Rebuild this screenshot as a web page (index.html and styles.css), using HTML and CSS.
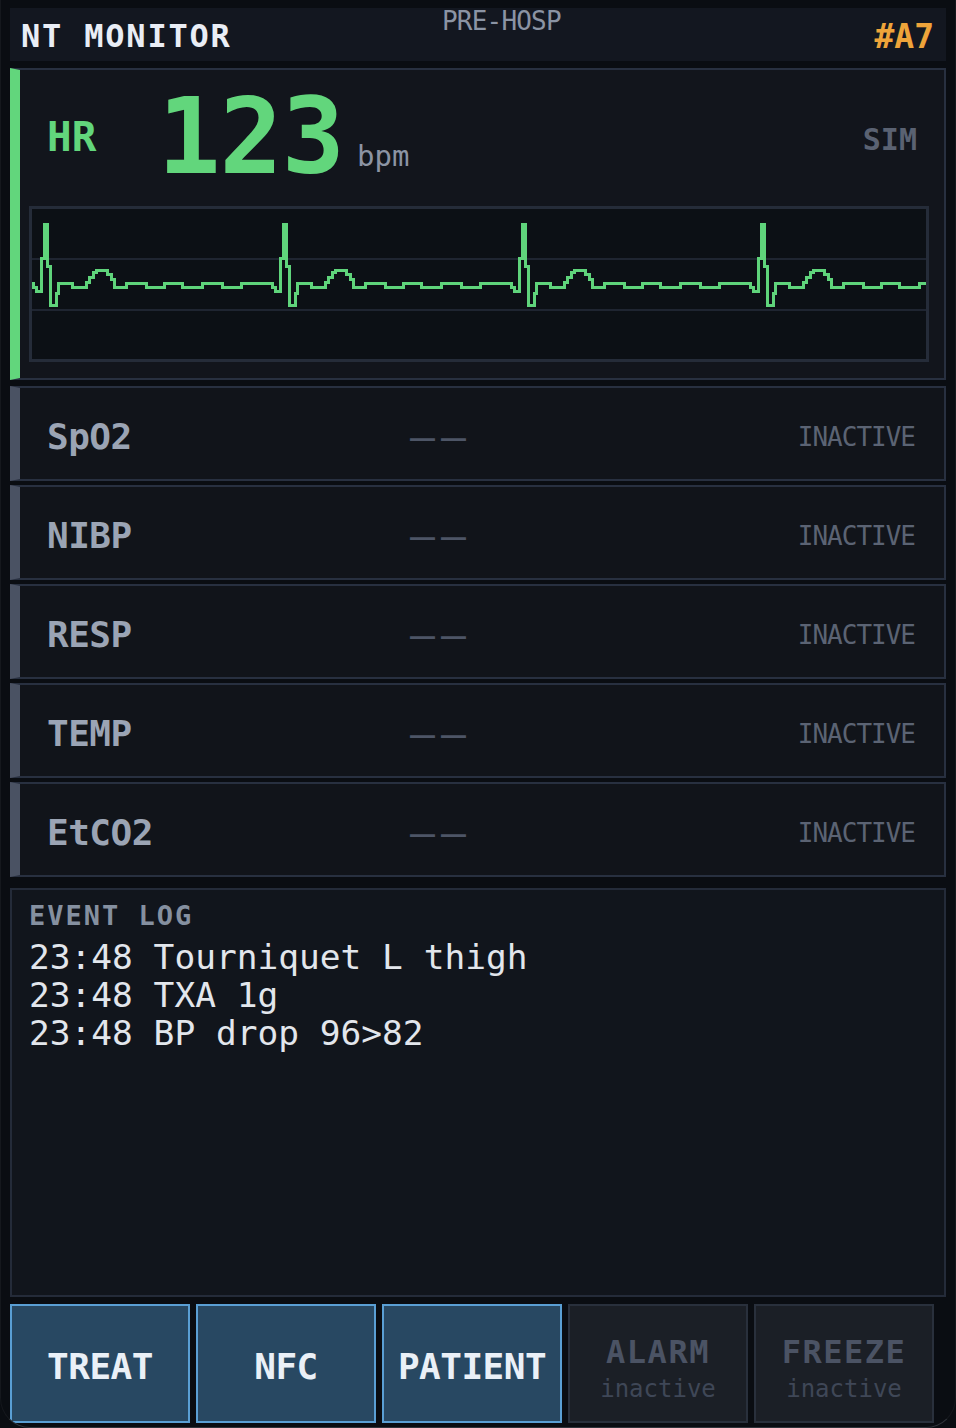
FILE: index.html
```html
<!DOCTYPE html>
<html lang="en">
<head>
<meta charset="utf-8">
<title>NT Monitor</title>
<link rel="stylesheet" href="styles.css">
</head>
<body>
<div class="device">
  <header class="topbar">
    <div class="title">NT MONITOR</div>
    <div class="mode">PRE-HOSP</div>
    <div class="unit">#A7</div>
  </header>

  <section class="hr-panel">
    <div class="hr-top">
      <span class="hr-label">HR</span>
      <span class="hr-value">123</span>
      <span class="hr-unit">bpm</span>
      <span class="hr-sim">SIM</span>
    </div>
    <div class="ecg">
      <svg class="ecg-svg" width="894" height="150" viewBox="32 209 894 150">
        <line class="grid" x1="32" y1="259" x2="926" y2="259"/>
        <line class="grid" x1="32" y1="310" x2="926" y2="310"/>
        <path class="trace" d="M32 283 h1
          v4h3v4h5v-33h3v-34h3v42h3v39h6v-12h2v-10h14v4h14v-5h3v-5h4v-5h3v-2h11v4h4v5h3v8h12v-4h20v4h18v-4h18v4h20v-4h20v4h19v-4h31
          v4h3v4h5v-33h3v-34h3v42h3v39h6v-12h2v-10h14v4h14v-5h3v-5h4v-5h3v-2h11v4h4v5h3v8h12v-4h20v4h18v-4h18v4h20v-4h20v4h19v-4h31
          v4h3v4h5v-33h3v-34h3v42h3v39h6v-12h2v-10h14v4h14v-5h3v-5h4v-5h3v-2h11v4h4v5h3v8h12v-4h20v4h18v-4h18v4h20v-4h20v4h19v-4h31
          v4h3v4h5v-33h3v-34h3v42h3v39h6v-12h2v-10h14v4h14v-5h3v-5h4v-5h3v-2h11v4h4v5h3v8h12v-4h20v4h18v-4h18v4h20v-4h20v4h19v-4h31"/>
      </svg>
    </div>
  </section>

  <section class="vitals">
    <div class="vital"><span class="v-label">SpO2</span><span class="v-dash">——</span><span class="v-state">INACTIVE</span></div>
    <div class="vital"><span class="v-label">NIBP</span><span class="v-dash">——</span><span class="v-state">INACTIVE</span></div>
    <div class="vital"><span class="v-label">RESP</span><span class="v-dash">——</span><span class="v-state">INACTIVE</span></div>
    <div class="vital"><span class="v-label">TEMP</span><span class="v-dash">——</span><span class="v-state">INACTIVE</span></div>
    <div class="vital"><span class="v-label">EtCO2</span><span class="v-dash">——</span><span class="v-state">INACTIVE</span></div>
  </section>

  <section class="log">
    <div class="log-title">EVENT LOG</div>
    <div class="log-lines">
      <div class="log-line">23:48 Tourniquet L thigh</div>
      <div class="log-line">23:48 TXA 1g</div>
      <div class="log-line">23:48 BP drop 96&gt;82</div>
    </div>
  </section>

  <nav class="actions">
    <button class="btn on"><span class="btn-main">TREAT</span></button>
    <button class="btn on"><span class="btn-main">NFC</span></button>
    <button class="btn on"><span class="btn-main">PATIENT</span></button>
    <button class="btn off"><span class="btn-main">ALARM</span><span class="btn-sub">inactive</span></button>
    <button class="btn off"><span class="btn-main">FREEZE</span><span class="btn-sub">inactive</span></button>
  </nav>
</div>
</body>
</html>
```

FILE: styles.css
```css
* {
  box-sizing: border-box;
  margin: 0;
  padding: 0;
}

html,
body {
  background: #0a0d12;
}

body {
  margin: 0;
  font-family: "DejaVu Sans Mono", "Liberation Mono", monospace;
}

.device {
  width: 956px;
  height: 1428px;
  overflow: hidden;
  background: #0a0d12;
  padding: 8px 9px 0 9px;
  border: 1px solid #15181d;
  border-top: 0;
  border-bottom-color: #30343b;
  border-radius: 0 0 30px 30px;
}

/* ---------- header ---------- */
.topbar {
  height: 53px;
  background: #131720;
  display: grid;
  grid-template-columns: 421px 1fr auto;
  align-items: start;
  padding: 0 12px 0 11px;
}

.title {
  margin-top: 12px;
  font-size: 32px;
  line-height: 32px;
  font-weight: bold;
  letter-spacing: 1.8px;
  color: #e9edf5;
  white-space: nowrap;
}

.mode {
  font-size: 26px;
  line-height: 26px;
  letter-spacing: -0.8px;
  color: #8b94a4;
  white-space: nowrap;
}

.unit {
  margin-top: 12px;
  font-size: 33px;
  line-height: 33px;
  font-weight: bold;
  color: #eea43a;
}

/* ---------- HR panel ---------- */
.hr-panel {
  margin-top: 7px;
  height: 312px;
  background: #12151c;
  border: 2px solid #283040;
  border-left: 10px solid #62d67c;
  padding: 0 15px 16px 9px;
}

.hr-top {
  height: 136px;
  display: flex;
  align-items: flex-start;
  white-space: nowrap;
}

.hr-label {
  margin: 47px 0 0 18px;
  font-size: 41px;
  line-height: 41px;
  font-weight: bold;
  color: #62d67c;
}

.hr-value {
  margin: 15px 0 0 61px;
  font-size: 105px;
  line-height: 105px;
  font-weight: bold;
  letter-spacing: -1px;
  color: #62d67c;
}

.hr-unit {
  margin: 72px 0 0 13px;
  font-size: 29px;
  line-height: 29px;
  color: #8c94a4;
}

.hr-sim {
  margin: 55px 12px 0 auto;
  font-size: 30px;
  line-height: 30px;
  font-weight: bold;
  color: #5a6272;
}

.ecg {
  height: 156px;
  background: #0c1015;
  border: 3px solid #252c39;
}

.ecg-svg {
  display: block;
  overflow: hidden;
}

.grid {
  stroke: #1f2531;
  stroke-width: 2;
  shape-rendering: crispEdges;
}

.trace {
  fill: none;
  stroke: #5fd47b;
  stroke-width: 3;
  stroke-linejoin: miter;
  shape-rendering: crispEdges;
}

/* ---------- vital rows ---------- */
.vitals {
  margin-top: 6px;
  display: flex;
  flex-direction: column;
  gap: 4px;
}

.vital {
  height: 95px;
  background: #11141a;
  border: 2px solid #283040;
  border-left: 10px solid #4a5263;
  display: grid;
  grid-template-columns: 363px 1fr auto;
  align-items: center;
  padding: 7px 29px 0 27px;
  white-space: nowrap;
}

.v-label {
  font-size: 36px;
  line-height: 36px;
  font-weight: bold;
  letter-spacing: -0.5px;
  color: #9ba4b4;
}

.v-dash {
  font-size: 41.5px;
  line-height: 41.5px;
  letter-spacing: 6px;
  color: #4d5566;
}

.v-state {
  font-size: 26px;
  line-height: 26px;
  letter-spacing: -1px;
  color: #5b6373;
}

/* ---------- event log ---------- */
.log {
  margin-top: 11px;
  height: 409px;
  background: #11151c;
  border: 2px solid #242b39;
  padding: 12px 17px;
}

.log-title {
  font-size: 27px;
  line-height: 27px;
  font-weight: bold;
  letter-spacing: 2px;
  color: #8590a0;
}

.log-lines {
  margin-top: 9px;
  font-size: 34.5px;
  line-height: 38px;
  color: #e2e6ec;
}

.log-line {
  white-space: nowrap;
}

/* ---------- action buttons ---------- */
.actions {
  margin-top: 7px;
  display: flex;
  gap: 6px;
}

.btn {
  width: 180px;
  height: 119px;
  border: 2px solid;
  display: flex;
  flex-direction: column;
  align-items: center;
  justify-content: center;
  font-family: "DejaVu Sans Mono", "Liberation Mono", monospace;
  white-space: nowrap;
}

.btn.on {
  background: #284862;
  border-color: #5a9fd4;
  color: #eaf0f7;
  padding-top: 6px;
}

.btn.on .btn-main {
  font-size: 36px;
  line-height: 36px;
  font-weight: bold;
  letter-spacing: -0.5px;
}

.btn.off {
  background: #1b1f26;
  border-color: #29303c;
  padding-top: 10px;
}

.btn.off .btn-main {
  font-size: 32px;
  line-height: 32px;
  font-weight: bold;
  letter-spacing: 1.5px;
  color: #4b5364;
}

.btn-sub {
  margin-top: 9px;
  font-size: 24px;
  line-height: 24px;
  color: #3f4757;
}
```
